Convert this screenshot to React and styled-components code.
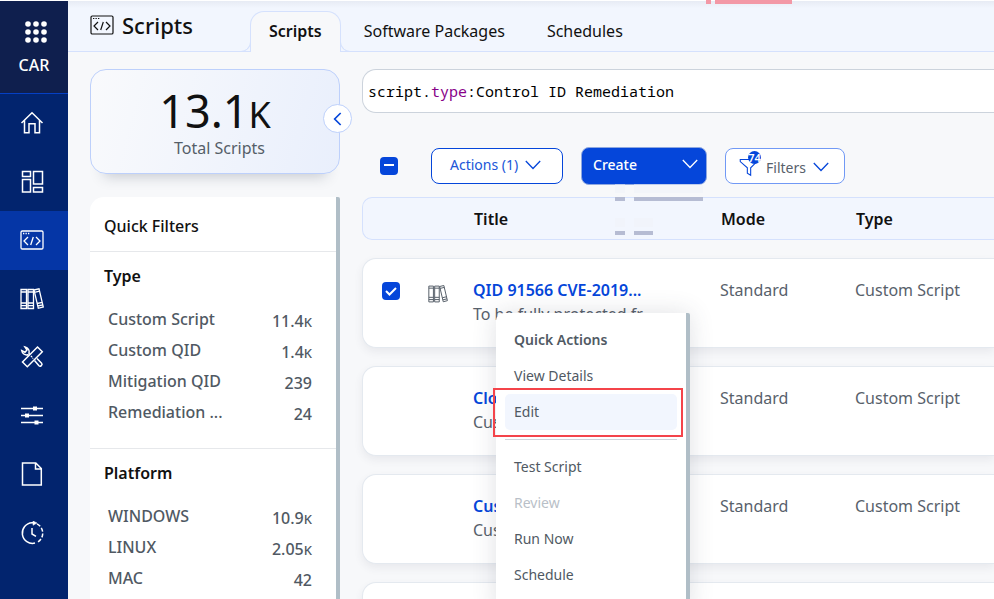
import { useState } from 'react';
import styled, { createGlobalStyle, css } from 'styled-components';

const GlobalStyle = createGlobalStyle`
  * {
    box-sizing: border-box;
  }

  body {
    margin: 0;
    background: #f7f8fa;
    color: #111;
    font-family: 'Noto Sans', sans-serif;
    font-size: 16px;
    overflow: hidden;
  }

  button, input {
    font-family: inherit;
  }
`;

const Page = styled.div`
  position: relative;
  display: grid;
  grid-template-columns: 68px minmax(0, 1fr);
  height: 100vh;
  padding-top: 1px;
  background: linear-gradient(#fff 1px, #f7f8fa 1px);
  overflow: hidden;
`;

const Sidebar = styled.aside`
  background: #02246e;
`;

const Brand = styled.div`
  display: flex;
  flex-direction: column;
  align-items: center;
  gap: 10px;
  height: 93px;
  padding-top: 20px;
  border-bottom: 1px solid #0540c4;
  background: #0f1f4e;
  color: #fff;
  line-height: 24px;
  font-weight: 500;
`;

const AppsButton = styled.button`
  display: flex;
  padding: 0 0 0 3px;
  border: 0;
  background: none;
  color: inherit;
`;

const Nav = styled.nav`
  display: grid;
  grid-auto-rows: 1fr;
  height: 468px;
`;

const NavLink = styled.a`
  display: flex;
  align-items: center;
  justify-content: center;
  padding-right: 4px;
  color: #fff;
  background: ${({ $active }) => ($active ? '#0536a6' : 'none')};
`;

const Main = styled.main`
  min-width: 0;
`;

const Header = styled.header`
  display: flex;
  height: 51px;
  padding-left: 22px;
  border-bottom: 1px solid #d5e1fd;
  background: linear-gradient(#e7ebf4, #f2f6fe 7px);
`;

const PageTitle = styled.h1`
  display: flex;
  align-items: center;
  gap: 8px;
  width: 160px;
  height: 48px;
  margin: 0;
  font-size: 22px;
  font-weight: 500;
`;

const Tabs = styled.div`
  display: flex;
  align-items: flex-end;
  gap: 4px;
  margin-bottom: -1px;
`;

const Tab = styled.button`
  position: relative;
  height: 41px;
  padding: 0 18px 2px;
  border: 1px solid transparent;
  background: none;
  color: #111;
  font-size: 16px;

  ${({ $active }) =>
    $active &&
    css`
      border-color: #d5e1fd;
      border-bottom: 0;
      border-radius: 14px 14px 0 0;
      background: #f7f8fa;
      font-weight: 600;

      &::before,
      &::after {
        content: '';
        position: absolute;
        bottom: 0;
        width: 10px;
        height: 10px;
        border-bottom: 1px solid #d5e1fd;
      }

      &::before {
        right: 100%;
        border-right: 1px solid #d5e1fd;
        border-bottom-right-radius: 10px;
      }

      &::after {
        left: 100%;
        border-left: 1px solid #d5e1fd;
        border-bottom-left-radius: 10px;
      }
    `}
`;

const Content = styled.div`
  display: grid;
  grid-template-columns: 250px minmax(0, 1fr);
  gap: 22px;
  padding: 17px 0 0 22px;
`;

const StatCard = styled.section`
  position: relative;
  height: 105px;
  padding-top: 20px;
  border: 1px solid #bdd0fb;
  border-radius: 16px;
  background: linear-gradient(105deg, #f9fafc, #e9effc);
  box-shadow: 0 16px 14px -14px rgba(40, 50, 70, 0.25);
  text-align: center;
`;

const StatValue = styled.div`
  font-size: 45px;
  line-height: 42px;

  small {
    font-size: 36px;
  }
`;

const StatLabel = styled.div`
  padding-left: 9px;
  color: #555e68;
  line-height: 24px;
`;

const CollapseButton = styled.button`
  position: absolute;
  top: 34px;
  right: -13px;
  display: flex;
  align-items: center;
  justify-content: center;
  width: 29px;
  height: 29px;
  padding: 0;
  border: 1px solid #bdd0fb;
  border-radius: 50%;
  background: #fff;
  color: #0546da;
`;

const FilterPanel = styled.section`
  height: 420px;
  margin-top: 23px;
  border-right: 4px solid #b0bec7;
  border-radius: 14px 2px 0 0;
  background: #fff;
`;

const PanelTitle = styled.h2`
  margin: 0;
  padding: 17px 14px 13px;
  font-size: 16px;
  font-weight: 500;
  line-height: 24px;
`;

const FilterGroup = styled.div`
  padding: 12px 24px 20px 14px;
  border-top: 1px solid #e6e8eb;
`;

const GroupTitle = styled.h3`
  margin: 0 0 16px;
  font-size: 16px;
  font-weight: 600;
  line-height: 24px;
`;

const FilterRow = styled.div`
  display: flex;
  justify-content: space-between;
  height: 31px;
  padding-left: 4px;
  color: #505963;
  font-weight: 500;
  line-height: 31px;
`;

const Count = styled.span`
  padding-top: 2px;

  small {
    font-size: 13px;
  }
`;

const SearchBox = styled.div`
  display: grid;
  align-items: center;
  height: 44px;
  padding-left: 5px;
  border: 1px solid #ccd3dc;
  border-right: 0;
  border-radius: 14px 0 0 14px;
  background: #fff;
  font-family: 'Noto Sans Mono', 'DejaVu Sans Mono', monospace;
  font-size: 15px;
  line-height: 24px;
`;

const SearchInput = styled.input`
  grid-area: 1 / 1;
  width: 100%;
  padding: 0;
  border: 0;
  outline: 0;
  background: none;
  color: transparent;
  caret-color: #111;
  font: inherit;
`;

const SearchHighlight = styled.span`
  grid-area: 1 / 1;
  color: #000;
  white-space: pre;

  em {
    color: #808;
    font-style: normal;
  }
`;

const Toolbar = styled.div`
  display: flex;
  align-items: center;
  height: 38px;
  margin-top: 34px;
  padding-left: 18px;
`;

const Checkbox = styled.input`
  display: block;
  appearance: none;
  width: 18px;
  height: 18px;
  margin: 0;
  border-radius: 4px;
  background: #fff;
  border: 1px solid #b0bec7;

  &:checked,
  &:indeterminate {
    border: 0;
    background: #0546da url("data:image/svg+xml,%3Csvg xmlns='http://www.w3.org/2000/svg' viewBox='0 0 18 18' fill='none' stroke='white' stroke-width='2'%3E%3Cpath d='M4 9l3.5 3.5L14 6'/%3E%3C/svg%3E");
  }

  &:indeterminate {
    background: #0546da url("data:image/svg+xml,%3Csvg xmlns='http://www.w3.org/2000/svg' viewBox='0 0 18 18' fill='none' stroke='white' stroke-width='2'%3E%3Cpath d='M4 8h10'/%3E%3C/svg%3E");
  }
`;

const ToolButton = styled.button`
  display: flex;
  align-items: center;
  gap: 7px;
  height: 36px;
  width: 132px;
  margin-left: 33px;
  padding: 0 0 3px 18px;
  border: 1px solid #0546da;
  border-radius: 8px;
  background: #fff;
  color: #2056d8;
  font-size: 14px;

  svg {
    color: #0546da;
  }
`;

const CreateButton = styled(ToolButton)`
  justify-content: space-between;
  height: 38px;
  width: 126px;
  margin-left: 18px;
  padding: 0 8px 4px 11px;
  border-color: #8fa8e0;
  background: #0546da;
  color: #fff;
  font-weight: 500;

  svg {
    color: #fff;
  }
`;

const FiltersButton = styled(ToolButton)`
  width: 120px;
  margin-left: 18px;
  padding: 2px 0 0 13px;
  border-color: #7199f5;
  color: #58616b;
`;

const FilterIcon = styled.span`
  position: relative;
  display: flex;
`;

const Badge = styled.span`
  position: absolute;
  top: -6px;
  left: 9px;
  width: 13px;
  height: 13px;
  border-radius: 50%;
  background: #0546da;
  color: #fff;
  font-size: 11px;
  font-weight: 600;
  line-height: 13px;
`;

const Table = styled.table`
  display: block;
  margin-top: 12px;

  thead,
  tbody {
    display: grid;
    gap: 18px;
  }

  thead {
    margin-bottom: 18px;
  }
`;

const TableRow = styled.tr`
  display: grid;
  grid-template-columns: 65px 45px 247px 135px minmax(0, 1fr);
  border: 1px solid #e4e9ef;
  border-right: 0;
  border-radius: 14px 0 0 14px;
  background: #fff;
`;

const HeadRow = styled(TableRow)`
  height: 43px;
  border-color: #d5e1fd;
  border-radius: 10px 0 0 10px;
  background: #f2f6fe;

  th {
    padding: 9px 1px;
    text-align: left;
    font-weight: 600;
    line-height: 24px;
  }
`;

const Row = styled(TableRow)`
  height: 90px;
  box-shadow: 0 4px 8px rgba(60, 70, 90, 0.08);

  td {
    padding: 19px 0 0;
    color: #58616b;
    line-height: 24px;
    white-space: nowrap;
  }
`;

const SelectSlot = styled.div`
  padding: 4px 0 0 19px;
`;

const TypeSlot = styled.div`
  display: flex;
  padding-top: 6px;
`;

const ScriptLink = styled.a`
  display: block;
  color: #0546da;
  font-weight: 600;
  text-decoration: none;
`;

const Menu = styled.div`
  position: absolute;
  top: 313px;
  left: 496px;
  width: 194px;
  height: 300px;
  padding: 9px 9px 0;
  border-right: 4px solid #b0bec7;
  border-radius: 8px 2px 0 0;
  background: #fff;
  box-shadow: 0 0 24px rgba(60, 70, 90, 0.16);
  font-size: 14px;
`;

const MenuTitle = styled.div`
  padding-left: 9px;
  color: #505963;
  font-weight: 600;
  line-height: 36px;
`;

const MenuItem = styled.button`
  position: relative;
  display: block;
  width: 100%;
  height: 36px;
  padding: 0 0 2px 9px;
  border: 0;
  border-radius: 5px;
  background: ${({ $active }) => ($active ? '#f2f6fe' : 'none')};
  color: #505963;
  font-size: 14px;
  text-align: left;

  &:disabled {
    color: #b9bfc8;
  }
`;

const Callout = styled.span`
  position: absolute;
  inset: -6px -6px -7px -12px;
  border: 2px solid #f4444a;
`;

const Divider = styled.hr`
  height: 1px;
  margin: 9px 0;
  border: 0;
  background: #d0d4da;
`;

const Smudge = styled.span`
  position: absolute;
  top: ${({ $y }) => $y}px;
  left: ${({ $x }) => $x}px;
  width: ${({ $w }) => $w}px;
  height: 4px;
  background: ${({ $color }) => $color || '#b6bcd3'};
  box-shadow: ${({ $color }) => ($color ? 'none' : '0 -13px 0 5px rgba(240, 242, 248, 0.5)')};
  clip-path: inset(-13px 0 0);
`;

const Stroke = ({ size = 24, width = 1.3, children }) => (
  <svg
    width={size}
    height={size}
    viewBox="0 0 24 24"
    fill="none"
    stroke="currentColor"
    strokeWidth={width}
    aria-hidden="true"
  >
    {children}
  </svg>
);

const AppsIcon = () => (
  <svg width="22" height="22" viewBox="0 0 22 22" fill="currentColor" aria-hidden="true">
    {[3, 11, 19].map((y) => [3, 11, 19].map((x) => <circle key={`${x}-${y}`} cx={x} cy={y} r="2.8" />))}
  </svg>
);

const HomeIcon = () => (
  <Stroke width={1.5}>
    <path d="M1.5 12 12 1.8 22.5 12M4.5 9.5v12.2H9v-9h6v9h4.5V9.5" />
  </Stroke>
);

const DashboardIcon = () => (
  <Stroke width={1.5}>
    <path d="M2.5 1.5h8v5h-8zM13.5 1.5h9V14h-9zM2.5 9.500h8v12.500h-8zM13.500 17.500h9V22h-9z" />
  </Stroke>
);

const CodeIcon = ({ size, width }) => (
  <Stroke size={size} width={width}>
    <rect x="1" y="3" width="22" height="18" rx="1.3" />
    <path d="M3 5.5h1.3M5.5 5.5h1.3M8 5.5h1.3M8 9l-4 4 4 4M16 9l4 4-4 4M13.3 9l-2.6 8" />
  </Stroke>
);

const BooksIcon = ({ size, width }) => (
  <Stroke size={size} width={width}>
    <path d="M1 2.5h5.5v19H1zM8 2.5h5.5v19H8zM1 5h5.5M1 16h5.5M1 18.7h5.5M8 5h5.5M8 16h5.5M8 18.7h5.5" />
    <path d="M14 3l5-1.2L23.3 20l-5 1.3zM14.5 5.3l5-1.2M17.2 16.5l5-1.2M17.8 19l5-1.2" />
  </Stroke>
);

const ToolsIcon = () => (
  <Stroke width={1.5}>
    <path d="M17.5 2 22.3 6.8l-15 15L2.5 17zM11 12l1-1M12.5 13.5l.5-.5" />
    <path d="M9.5 9.5 9 8.3c.7-2.6-.8-5.4-4-6.3l2 3-2 2.2-3.300-1.700c.5 3 3 4.900 6 4.300l.8.7M14.500 15.500l4.500 5.300c1.300 1.400 4-.9 2.600-2.500L17 13.500" />
  </Stroke>
);

const SlidersIcon = () => (
  <Stroke width={1.5}>
    <path d="M1 4.5h22M1 11.5h22M1 18.5h22" />
    <path d="M13 4.5h4M5 11.5h4M14.500 18.5h4" strokeWidth="4" />
  </Stroke>
);

const FileIcon = () => (
  <Stroke width={1.5}>
    <path d="M2.5 1h13.300l5.500 5.500V23H2.500zM15.500 1v6h5.800" />
  </Stroke>
);

const HistoryIcon = () => (
  <Stroke width={1.5}>
    <path d="M15 22.100a10.300 10.300 0 1 1-3-20.300h2M12 7v6l4 2.300" />
    <path d="M17 2.900a10.300 10.300 0 0 1 .5 18.200" strokeDasharray="4 1.800" />
    <path d="M13 0l4 2-4 2.300z" fill="currentColor" strokeWidth=".5" />
  </Stroke>
);

const ChevronIcon = () => (
  <svg width="16" height="10" viewBox="0 0 16 10" fill="none" stroke="currentColor" strokeWidth="1.3" aria-hidden="true">
    <path d="M.8 1 8 8.5 15.2 1" />
  </svg>
);

const NAV_ITEMS = [
  { name: 'Home', Icon: HomeIcon },
  { name: 'Dashboard', Icon: DashboardIcon },
  { name: 'Scripts', Icon: CodeIcon, active: true },
  { name: 'Library', Icon: BooksIcon },
  { name: 'Tools', Icon: ToolsIcon },
  { name: 'Configuration', Icon: SlidersIcon },
  { name: 'Reports', Icon: FileIcon },
  { name: 'Activity', Icon: HistoryIcon },
];

const TABS = ['Scripts', 'Software Packages', 'Schedules'];

const FILTER_GROUPS = [
  {
    title: 'Type',
    rows: [
      ['Custom Script', '11.4', 'K'],
      ['Custom QID', '1.4', 'K'],
      ['Mitigation QID', '239'],
      ['Remediation ...', '24'],
    ],
  },
  {
    title: 'Platform',
    rows: [
      ['WINDOWS', '10.9', 'K'],
      ['LINUX', '2.05', 'K'],
      ['MAC', '42'],
    ],
  },
];

const SCRIPTS = [
  { title: 'QID 91566 CVE-2019...', detail: 'To be fully protected fr...', selected: true },
  { title: 'Clo...', detail: 'Cus...' },
  { title: 'Cus...', detail: 'Cus...' },
  { title: '', detail: '' },
];

export default function App() {
  const [tab, setTab] = useState('Scripts');
  const [query, setQuery] = useState('script.type:Control ID Remediation');

  return (
    <>
      <GlobalStyle />
      <Page>
        <Sidebar>
          <Brand>
            <AppsButton aria-label="Apps">
              <AppsIcon />
            </AppsButton>
            CAR
          </Brand>
          <Nav>
            {NAV_ITEMS.map(({ name, Icon, active }) => (
              <NavLink key={name} href="#" aria-label={name} $active={active}>
                <Icon />
              </NavLink>
            ))}
          </Nav>
        </Sidebar>

        <Main>
          <Header>
            <PageTitle>
              <CodeIcon width={1.2} />
              Scripts
            </PageTitle>
            <Tabs role="tablist">
              {TABS.map((name) => (
                <Tab
                  key={name}
                  role="tab"
                  aria-selected={tab === name}
                  $active={tab === name}
                  onClick={() => setTab(name)}
                >
                  {name}
                </Tab>
              ))}
            </Tabs>
          </Header>

          <Content>
            <div>
              <StatCard>
                <StatValue>
                  13.1<small>K</small>
                </StatValue>
                <StatLabel>Total Scripts</StatLabel>
                <CollapseButton aria-label="Collapse">
                  <Stroke size={16} width={2.5}>
                    <path d="M16 3 7 12l9 9" />
                  </Stroke>
                </CollapseButton>
              </StatCard>
              <FilterPanel>
                <PanelTitle>Quick Filters</PanelTitle>
                {FILTER_GROUPS.map(({ title, rows }) => (
                  <FilterGroup key={title}>
                    <GroupTitle>{title}</GroupTitle>
                    {rows.map(([label, value, unit]) => (
                      <FilterRow key={label}>
                        {label}
                        <Count>
                          {value}
                          {unit && <small>{unit}</small>}
                        </Count>
                      </FilterRow>
                    ))}
                  </FilterGroup>
                ))}
              </FilterPanel>
            </div>

            <div>
              <SearchBox>
                <SearchHighlight aria-hidden="true">
                  {query.split(/(type)/).map((part, i) => (part === 'type' ? <em key={i}>{part}</em> : part))}
                </SearchHighlight>
                <SearchInput aria-label="Search" value={query} onChange={(e) => setQuery(e.target.value)} />
              </SearchBox>

              <Toolbar>
                <Checkbox
                  type="checkbox"
                  aria-label="Select all"
                  ref={(el) => {
                    if (el) el.indeterminate = true;
                  }}
                />
                <ToolButton>
                  Actions (1)
                  <ChevronIcon />
                </ToolButton>
                <CreateButton>
                  Create
                  <ChevronIcon />
                </CreateButton>
                <FiltersButton>
                  <FilterIcon>
                    <Stroke size={20}>
                      <path d="M1.5 3h20v2.5L14 13v9l-4-2.500V13L1.500 5.500z" />
                    </Stroke>
                    <Badge>74</Badge>
                  </FilterIcon>
                  Filters
                  <ChevronIcon />
                </FiltersButton>
              </Toolbar>

              <Table>
                <thead>
                  <HeadRow>
                    <th />
                    <th />
                    <th>Title</th>
                    <th>Mode</th>
                    <th>Type</th>
                  </HeadRow>
                </thead>
                <tbody>
                  {SCRIPTS.map(({ title, detail, selected }, i) => (
                    <Row key={i}>
                      <td>
                        {selected && (
                          <SelectSlot>
                            <Checkbox type="checkbox" aria-label={title} defaultChecked />
                          </SelectSlot>
                        )}
                      </td>
                      <td>
                        {selected && (
                          <TypeSlot>
                            <BooksIcon size={20} width={1.2} />
                          </TypeSlot>
                        )}
                      </td>
                      <td>
                        <ScriptLink href="#">{title}</ScriptLink>
                        {detail}
                      </td>
                      <td>{title && 'Standard'}</td>
                      <td>{title && 'Custom Script'}</td>
                    </Row>
                  ))}
                </tbody>
              </Table>
            </div>
          </Content>
        </Main>

        <Menu role="menu">
          <MenuTitle>Quick Actions</MenuTitle>
          <MenuItem role="menuitem">View Details</MenuItem>
          <MenuItem role="menuitem" $active>
            Edit
            <Callout />
          </MenuItem>
          <Divider />
          <MenuItem role="menuitem">Test Script</MenuItem>
          <MenuItem role="menuitem" disabled>
            Review
          </MenuItem>
          <MenuItem role="menuitem">Run Now</MenuItem>
          <MenuItem role="menuitem">Schedule</MenuItem>
        </Menu>

        <Smudge $x={706} $y={0} $w={5} $color="#f398a6" />
        <Smudge $x={715} $y={0} $w={77} $color="#f398a6" />
        <Smudge $x={615} $y={197} $w={10} />
        <Smudge $x={634} $y={197} $w={69} />
        <Smudge $x={615} $y={231} $w={10} />
        <Smudge $x={634} $y={231} $w={19} />
      </Page>
    </>
  );
}
